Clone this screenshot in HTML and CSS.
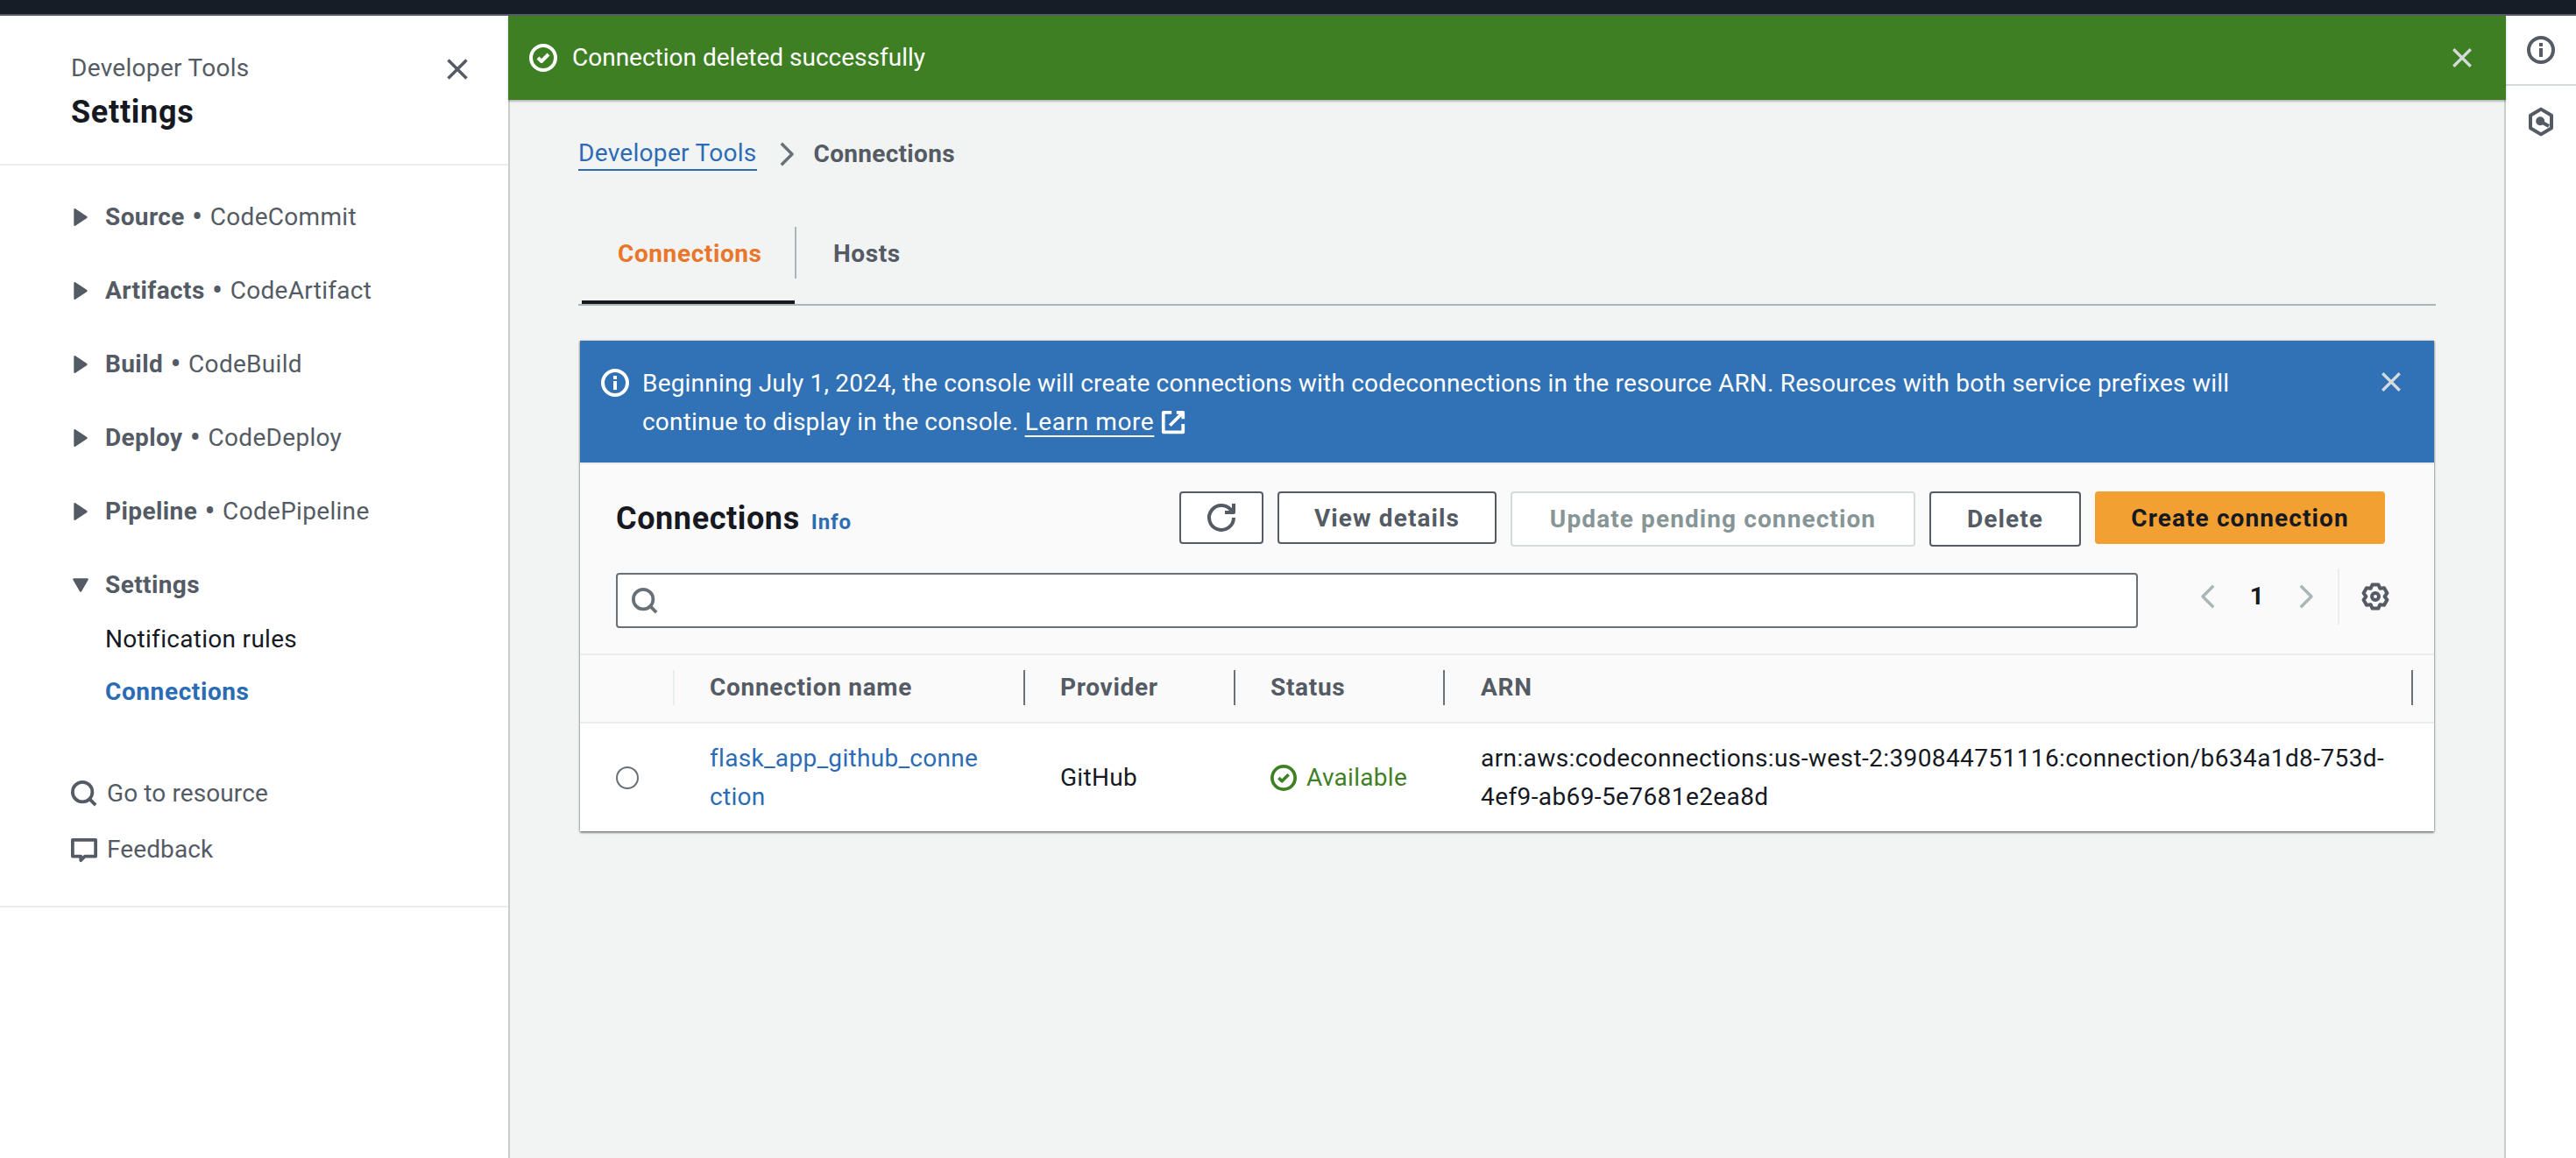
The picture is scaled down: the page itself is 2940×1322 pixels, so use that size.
FILE: index.html
```html
<!DOCTYPE html>
<html lang="en">
<head>
  <meta charset="UTF-8" />
  <title>Connections | Developer Tools</title>
  <link rel="stylesheet" href="styles.css">
</head>
<body>
  <div class="topbar"></div>
  <div class="app">
    <aside class="sidebar">
      <div class="side-head">
        <div>
          <div class="side-sup">Developer Tools</div>
          <div class="side-title">Settings</div>
        </div>
        <svg class="icon side-close" viewBox="0 0 16 16"><path d="M2 2l12 12M14 2L2 14"/></svg>
      </div>
      <nav class="side-nav">
        <div class="nav-item"><svg class="caret" viewBox="0 0 16 20"><path d="M2 2l12 8-12 8z"/></svg><span><b>Source</b> <i class="dot">•</i> CodeCommit</span></div>
        <div class="nav-item"><svg class="caret" viewBox="0 0 16 20"><path d="M2 2l12 8-12 8z"/></svg><span><b>Artifacts</b> <i class="dot">•</i> CodeArtifact</span></div>
        <div class="nav-item"><svg class="caret" viewBox="0 0 16 20"><path d="M2 2l12 8-12 8z"/></svg><span><b>Build</b> <i class="dot">•</i> CodeBuild</span></div>
        <div class="nav-item"><svg class="caret" viewBox="0 0 16 20"><path d="M2 2l12 8-12 8z"/></svg><span><b>Deploy</b> <i class="dot">•</i> CodeDeploy</span></div>
        <div class="nav-item"><svg class="caret" viewBox="0 0 16 20"><path d="M2 2l12 8-12 8z"/></svg><span><b>Pipeline</b> <i class="dot">•</i> CodePipeline</span></div>
        <div class="nav-item nav-item-open"><svg class="caret" viewBox="0 0 16 20"><path d="M1 4h14l-7 12z"/></svg><span><b>Settings</b></span></div>
        <div class="nav-sub">Notification rules</div>
        <div class="nav-sub nav-sub-active">Connections</div>
      </nav>
      <div class="side-links">
        <div class="side-link"><svg class="icon" viewBox="0 0 16 16"><circle cx="7" cy="7" r="6"/><path d="M11 11l4 4"/></svg>Go to resource</div>
        <div class="side-link"><svg class="icon" viewBox="0 0 16 16"><path d="M1 2h14v10H8.500L6 14.500V12H1z"/></svg>Feedback</div>
      </div>
    </aside>

    <main class="main">
      <div class="flash">
        <svg class="icon" viewBox="0 0 16 16"><circle cx="8" cy="8" r="7"/><path d="M5 8l2 2 4-4"/></svg>
        <span class="flash-text">Connection deleted successfully</span>
        <svg class="icon flash-close" viewBox="0 0 16 16"><path d="M2 2l12 12M14 2L2 14"/></svg>
      </div>

      <div class="content">
        <div class="breadcrumb">
          <a class="crumb-link">Developer Tools</a>
          <svg class="icon crumb-sep" viewBox="0 0 16 16"><path d="M5 1l7 7-7 7"/></svg>
          <span class="crumb-current">Connections</span>
        </div>

        <div class="tabs">
          <div class="tab tab-active">Connections</div>
          <div class="tab">Hosts</div>
        </div>

        <div class="card">
          <div class="alert">
            <svg class="icon" viewBox="0 0 16 16"><circle cx="8" cy="8" r="7"/><path d="M8 7v5M8 4v2"/></svg>
            <div class="alert-text">Beginning July 1, 2024, the console will create connections with codeconnections in the resource ARN. Resources with both service prefixes will continue to display in the console. <a class="alert-link">Learn more</a> <svg class="icon ext" viewBox="0 0 16 16"><path d="M10 2h4v4M6 10l8-8M14 9v5H2V2h5"/></svg></div>
            <svg class="icon alert-close" viewBox="0 0 16 16"><path d="M2 2l12 12M14 2L2 14"/></svg>
          </div>

          <div class="card-head">
            <div class="head-row">
              <h2 class="card-title">Connections</h2>
              <a class="info-link">Info</a>
              <div class="actions">
                <button class="btn btn-icon"><svg class="icon" viewBox="0 0 16 16"><path d="M10 5h5V0"/><path d="M15 8a7 7 0 1 1-1-3.600"/></svg></button>
                <button class="btn btn-view">View details</button>
                <button class="btn btn-disabled">Update pending connection</button>
                <button class="btn btn-delete">Delete</button>
                <button class="btn btn-primary">Create connection</button>
              </div>
            </div>
            <div class="filter-row">
              <div class="search"><svg class="icon" viewBox="0 0 16 16"><circle cx="7" cy="7" r="6"/><path d="M11 11l4 4"/></svg></div>
              <div class="pager">
                <svg class="icon pager-arrow" viewBox="0 0 16 16"><path d="M11 1L4 8l7 7"/></svg>
                <span class="page-num">1</span>
                <svg class="icon pager-arrow" viewBox="0 0 16 16"><path d="M5 1l7 7-7 7"/></svg>
              </div>
              <div class="prefs">
                <svg class="icon" viewBox="0 0 16 16"><path d="M6.310 1.210H9.690L10.650 3.410 13.040 3.140 14.730 6.070 13.300 8 14.730 9.930 13.040 12.860 10.650 12.590 9.690 14.790H6.310L5.350 12.590 2.960 12.860 1.270 9.930 2.700 8 1.270 6.070 2.960 3.140 5.350 3.410z"/><circle cx="8" cy="8" r="2"/></svg>
              </div>
            </div>
          </div>

          <div class="table">
            <div class="cell-head"></div>
            <div class="cell-head"><span>Connection name</span></div>
            <div class="cell-head"><span>Provider</span></div>
            <div class="cell-head"><span>Status</span></div>
            <div class="cell-head cell-head-arn"><span>ARN</span></div>

            <div class="cell cell-radio"><span class="radio"></span></div>
            <div class="cell cell-name"><a class="name-link">flask_app_github_connection</a></div>
            <div class="cell">GitHub</div>
            <div class="cell cell-status"><svg class="icon" viewBox="0 0 16 16"><circle cx="8" cy="8" r="7"/><path d="M5 8l2 2 4-4"/></svg>Available</div>
            <div class="cell cell-arn">arn:aws:codeconnections:us-west-2:390844751116:connection/b634a1d8-753d-4ef9-ab69-5e7681e2ea8d</div>
          </div>
        </div>
      </div>
    </main>

    <aside class="rail">
      <div class="rail-item rail-info"><svg class="icon" viewBox="0 0 16 16"><circle cx="8" cy="8" r="7"/><path d="M8 7v5M8 4v2"/></svg></div>
      <div class="rail-item rail-hex"><svg class="icon" viewBox="0 0 16 16"><path d="M8 .800l6 3.600v7.200l-6 3.600-6-3.600V4.400z"/><circle class="hex-dot" cx="7.600" cy="7.600" r="1.500"/><path d="M8 8l4.500 2.500"/></svg></div>
    </aside>
  </div>
</body>
</html>
```

FILE: styles.css
```css
* {
  box-sizing: border-box;
}
html, body {
  margin: 0;
  height: 100%;
}
body {
  font-family: Roboto, Arial, sans-serif;
  font-size: 28px;
  line-height: 44px;
  letter-spacing: .3px;
  color: #16191f;
  display: flex;
  flex-direction: column;
  overflow: hidden;
}
.topbar {
  height: 18px;
  flex: none;
  background: #161d26;
  border-bottom: 2px solid #545b64;
}
.app {
  flex: 1;
  display: flex;
  min-height: 0;
}
.icon {
  width: 32px;
  height: 32px;
  flex: none;
  fill: none;
  stroke: currentColor;
  stroke-width: 2;
  stroke-linejoin: round;
  overflow: visible;
}

/* left panel */
.sidebar {
  width: 580px;
  flex: none;
  background: #fff;
  color: #545b64;
}
.side-head {
  height: 171px;
  padding: 38px 40px 0 81px;
  display: flex;
  justify-content: space-between;
  border-bottom: 2px solid #eaeded;
}
.side-sup {
  line-height: 44px;
}
.side-title {
  margin-top: 2px;
  font-size: 36px;
  font-weight: 700;
  line-height: 52px;
  letter-spacing: .7px;
  color: #16191f;
}
.side-close {
  width: 28px;
  height: 28px;
  margin: 9px 4px 0 0;
}
.side-nav {
  padding: 37px 0 0 81px;
}
.nav-item {
  height: 84px;
  display: flex;
  align-items: flex-start;
  word-spacing: 1px;
}
.nav-item-open {
  height: 62px;
}
.nav-item b {
  font-weight: 700;
  letter-spacing: .4px;
}
.dot {
  font-style: normal;
  font-size: 36px;
  line-height: 1;
  vertical-align: -3px;
}
.caret {
  width: 22px;
  height: 22px;
  margin: 11px 17px 0 0;
  flex: none;
  fill: #545b64;
  stroke: #545b64;
  stroke-width: 2;
  stroke-linejoin: round;
}
.nav-sub {
  padding-left: 39px;
  height: 60px;
  color: #16191f;
}
.nav-sub-active {
  color: #2b6cb5;
  font-weight: 700;
  letter-spacing: .6px;
}
.side-links {
  margin: 46px 0 0;
  padding: 0 0 32px 81px;
  border-bottom: 2px solid #eaeded;
  letter-spacing: .1px;
}
.side-link {
  display: flex;
  align-items: center;
  gap: 11px;
  height: 64px;
}
.side-link .icon {
  width: 30px;
  height: 30px;
}

/* main column */
.main {
  flex: 1;
  display: flex;
  flex-direction: column;
  min-width: 0;
  background: #f2f3f3;
}
.flash {
  height: 96px;
  flex: none;
  display: flex;
  align-items: center;
  padding: 0 37px 0 24px;
  background: #3f7f24;
  color: #fff;
  letter-spacing: 0;
  box-shadow: 0 2px 2px rgba(0, 0, 0, .25);
  position: relative;
}
.flash-text {
  margin-left: 17px;
}
.flash-close {
  width: 26px;
  height: 26px;
  margin-left: auto;
  color: #d5dbdb;
}
.content {
  flex: 1;
  padding: 40px 80px 0;
  border-left: 2px solid #c9cdce;
  border-right: 2px solid #c9cdce;
}
.breadcrumb {
  display: flex;
  align-items: center;
  margin-left: -2px;
  height: 44px;
}
.crumb-link {
  color: #2b6cb5;
  border-bottom: 2px solid #2b6cb5;
  line-height: 36px;
}
.crumb-sep {
  width: 28px;
  height: 28px;
  margin: 0 18px 0 19px;
  color: #687078;
}
.crumb-current {
  color: #545b64;
  font-weight: 700;
}
.tabs {
  margin: 61px -2px 0;
  padding-left: 4px;
  height: 90px;
  display: flex;
  border-bottom: 2px solid #aab7b8;
  font-weight: 700;
  letter-spacing: .6px;
  color: #545b64;
}
.tab {
  height: 88px;
  padding: 9px 42px 0 44px;
}
.tab-active {
  position: relative;
  width: 243px;
  padding-left: 41px;
  color: #e9762b;
  border-bottom: 4px solid #16191f;
}
.tab-active::after {
  content: "";
  position: absolute;
  right: -2px;
  top: 0;
  height: 59px;
  border-right: 2px solid #aab7b8;
}

/* container */
.card {
  margin-top: 40px;
  background: #fff;
  box-shadow: 0 2px 2px rgba(0, 0, 0, .4), 1px 0 2px rgba(0, 0, 0, .2), -1px 0 2px rgba(0, 0, 0, .2);
}
.alert {
  height: 139px;
  padding: 27px 36px 0 24px;
  display: flex;
  background: #3171b5;
  color: #fff;
  letter-spacing: .2px;
}
.alert .icon {
  margin-top: 5px;
}
.alert-text {
  flex: 1;
  margin-left: 15px;
  width: 0;
  padding-right: 140px;
}
.alert-link {
  letter-spacing: .6px;
  text-decoration: underline;
  text-underline-offset: 6px;
  text-decoration-thickness: 2px;
}
.alert .ext {
  width: 30px;
  height: 30px;
  margin: 0;
  vertical-align: -6px;
}
.alert .alert-close {
  width: 26px;
  height: 26px;
  margin-top: 7px;
  color: #d5dbdb;
}
.card-head {
  background: #fafafa;
  padding: 31px 56px 0 41px;
  height: 220px;
  border-top: 2px solid #eaeded;
  border-bottom: 2px solid #eaeded;
}
.head-row {
  display: flex;
  align-items: flex-start;
}
.card-title {
  margin: 1px 0 0;
  font-size: 36px;
  font-weight: 700;
  line-height: 60px;
  letter-spacing: .6px;
}
.info-link {
  margin: 13px 0 0 13px;
  font-size: 24px;
  font-weight: 700;
  letter-spacing: .9px;
  color: #2b6cb5;
}
.actions {
  margin-left: auto;
  display: flex;
  align-items: flex-start;
  gap: 16px;
}
.btn {
  height: 60px;
  border: 2px solid #545b64;
  border-radius: 4px;
  background: #fff;
  color: #545b64;
  font: 700 28px Roboto, Arial, sans-serif;
  letter-spacing: 1.100px;
  padding: 0;
}
.btn-icon {
  width: 96px;
}
.btn-icon .icon {
  display: block;
  margin: 0 auto;
}
.btn-view {
  width: 250px;
}
.btn-disabled {
  width: 462px;
  height: 63px;
  border-color: #d5dbdb;
  color: #879596;
}
.btn-delete {
  width: 173px;
  height: 63px;
}
.btn-primary {
  width: 331px;
  border: 0;
  background: #f3a032;
  color: #16191f;
}
.filter-row {
  margin: 30px -30px 0 0;
  display: flex;
  align-items: flex-start;
}
.search {
  width: 1737px;
  height: 63px;
  flex: none;
  display: flex;
  align-items: center;
  padding-left: 16px;
  border: 2px solid #687078;
  border-radius: 4px;
  background: #fff;
  color: #687078;
}
.search .icon {
  width: 30px;
  height: 30px;
}
.pager {
  margin-left: 67px;
  width: 138px;
  height: 54px;
  display: flex;
  align-items: center;
  justify-content: space-between;
  flex: none;
}
.pager-arrow {
  width: 28px;
  height: 28px;
  color: #aab7b8;
}
.page-num {
  font-weight: 700;
}
.prefs {
  margin: -5px 0 0 23px;
  padding-left: 25px;
  height: 64px;
  display: flex;
  align-items: center;
  border-left: 2px solid #eaeded;
  color: #545b64;
}

/* table */
.table {
  display: grid;
  grid-template-columns: 108px 400px 240px 239px 1129px;
}
.cell-head {
  height: 78px;
  background: #fafafa;
  border-bottom: 2px solid #eaeded;
  padding-top: 17px;
  font-weight: 700;
  letter-spacing: .7px;
  color: #545b64;
}
.cell-head span {
  display: block;
  height: 40px;
  line-height: 40px;
  padding-left: 40px;
  border-right: 2px solid #687078;
}
.cell-head-arn span {
  width: 1105px;
  padding-left: 41px;
}
.cell-head:first-child::after {
  content: "";
  display: block;
  height: 40px;
  border-right: 2px solid #eaeded;
}
.cell {
  min-height: 123px;
  padding: 18px 0 17px 40px;
  display: flex;
  align-items: center;
}
.cell-radio {
  padding-left: 41px;
}
.radio {
  width: 26px;
  height: 26px;
  border: 2px solid #687078;
  border-radius: 50%;
  background: #fff;
}
.cell-name {
  padding-right: 50px;
  word-break: break-all;
}
.name-link {
  color: #2b6cb5;
}
.cell-status {
  color: #3f8024;
}
.cell-status .icon {
  width: 30px;
  height: 30px;
  margin-right: 11px;
}
.cell-arn {
  display: block;
  padding: 18px 23px 17px 41px;
  letter-spacing: .4px;
}

/* right rail */
.rail {
  width: 80px;
  flex: none;
  background: #fff;
  color: #545b64;
}
.rail-item {
  height: 80px;
  display: flex;
  align-items: center;
  justify-content: center;
}
.rail-info {
  border-bottom: 2px solid #d5dbdb;
}
.rail-hex {
  margin-top: 1px;
}
.hex-dot {
  fill: currentColor;
}
```
